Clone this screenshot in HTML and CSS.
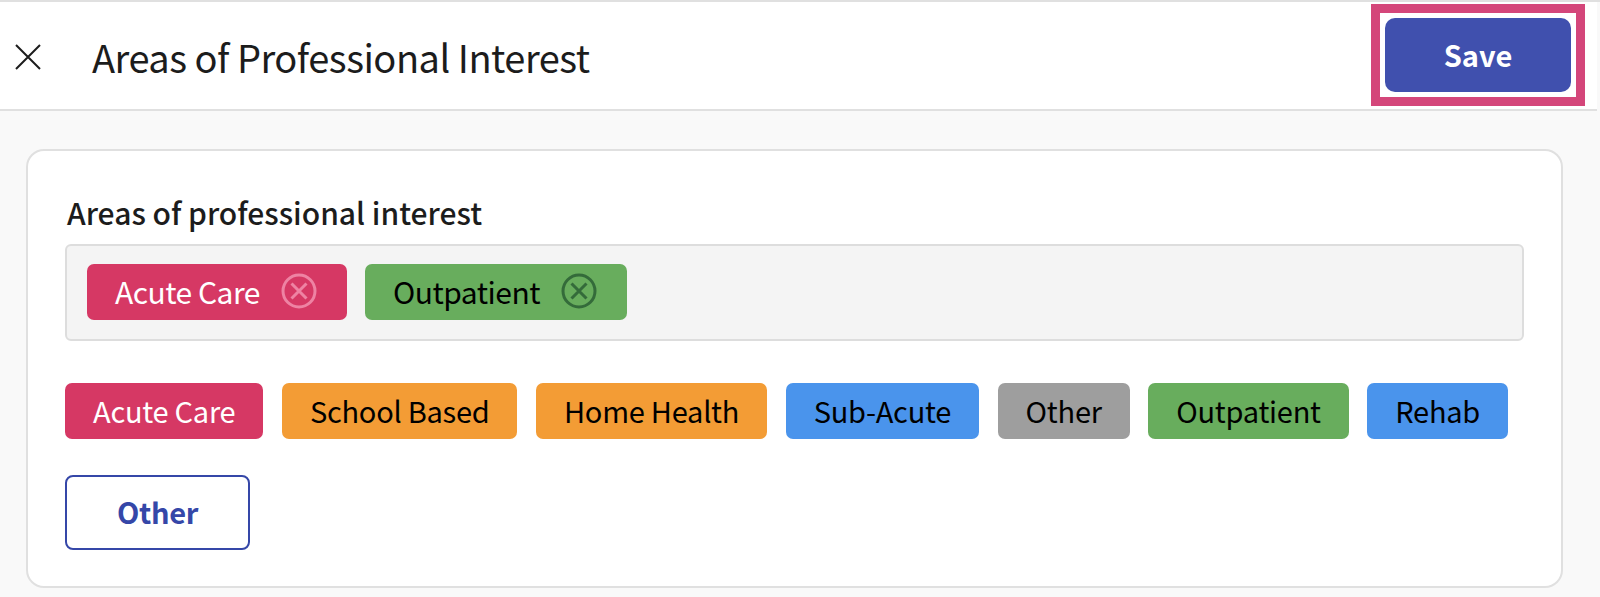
FILE: index.html
```html
<!DOCTYPE html>
<html lang="en">
<head>
    <meta charset="UTF-8">
    <meta name="viewport" content="width=device-width, initial-scale=1.0">
    <title>Areas of Professional Interest</title>
    <link rel="stylesheet" href="styles.css">
</head>
<body>
    <header class="top-bar">
        <div class="top-left">
            <svg class="close-icon" viewBox="0 0 26 26" width="26" height="26">
                <path d="M1 1 L25 25 M25 1 L1 25" stroke="#1c1c1c" stroke-width="2" fill="none"/>
            </svg>
            <h1 class="page-title">Areas of Professional Interest</h1>
        </div>
        <div class="save-highlight">
            <button class="save-btn">Save</button>
        </div>
    </header>

    <main class="card">
        <label class="field-label">Areas of professional interest</label>
        <div class="selected-box">
            <span class="tag pink selected-tag">Acute Care
                <svg class="remove-icon" viewBox="0 0 36 36" width="36" height="36">
                    <circle cx="18" cy="18" r="16" stroke="#ee83a3" stroke-width="3" fill="none"/>
                    <path d="M10.5 10.5 L25.5 25.5 M25.5 10.5 L10.5 25.5" stroke="#ee83a3" stroke-width="3" fill="none"/>
                </svg>
            </span>
            <span class="tag green selected-tag">Outpatient
                <svg class="remove-icon" viewBox="0 0 36 36" width="36" height="36">
                    <circle cx="18" cy="18" r="16" stroke="#346b3a" stroke-width="3" fill="none"/>
                    <path d="M10.5 10.5 L25.5 25.5 M25.5 10.5 L10.5 25.5" stroke="#346b3a" stroke-width="3" fill="none"/>
                </svg>
            </span>
        </div>
        <div class="options">
            <span class="tag pink">Acute Care</span>
            <span class="tag orange">School Based</span>
            <span class="tag orange">Home Health</span>
            <span class="tag blue">Sub-Acute</span>
            <span class="tag gray">Other</span>
            <span class="tag green">Outpatient</span>
            <span class="tag blue">Rehab</span>
        </div>
        <button class="other-btn">Other</button>
    </main>
</body>
</html>
```

FILE: styles.css
```css
* {
    box-sizing: border-box;
}

html, body {
    height: 100%;
}

body {
    margin: 0;
    padding-top: 2px;
    overflow: hidden;
    font-family: "Noto Sans CJK KR", "Noto Sans", sans-serif;
    background-color: #f9f9f9;
    box-shadow: inset 0 2px 0 #e0e0e0;
}

.top-bar {
    display: flex;
    justify-content: space-between;
    align-items: center;
    height: 109px;
    margin-right: 3px;
    padding: 0 12px 0 15px;
    background-color: #fff;
    border-bottom: 2px solid #e0e0e0;
}

.top-left {
    display: flex;
    align-items: center;
    gap: 51px;
    margin-top: 3px;
}

.close-icon {
    display: block;
}

.page-title {
    margin: 0;
    font-size: 38px;
    font-weight: 400;
    line-height: 50px;
    letter-spacing: -0.5px;
    color: #1c1c1c;
}

.save-highlight {
    align-self: flex-start;
    width: 214px;
    height: 102px;
    margin-top: 2px;
    padding: 5px;
    border: 9px solid #d4467a;
    background-color: #fff;
}

.save-btn {
    display: block;
    width: 100%;
    height: 100%;
    padding: 0 0 2px;
    border: none;
    border-radius: 10px;
    background-color: #4050ae;
    color: #fff;
    font-family: inherit;
    font-size: 29px;
    font-weight: 700;
}

.card {
    margin: 38px 37px 0 26px;
    height: 439px;
    padding: 43px 37px 0;
    background-color: #fff;
    border: 2px solid #e0e0e0;
    border-radius: 18px;
}

.field-label {
    display: block;
    margin-left: 2px;
    font-size: 30px;
    font-weight: 500;
    line-height: 36px;
    color: #1c1c1c;
}

.selected-box {
    display: flex;
    gap: 18px;
    height: 97px;
    margin-top: 14px;
    padding: 18px 20px;
    background-color: #f4f4f4;
    border: 2px solid #ddd;
    border-radius: 6px;
}

.options {
    display: flex;
    gap: 18.5px;
    margin-top: 42px;
}

.tag {
    display: flex;
    align-items: center;
    height: 56px;
    padding: 0 28px 2px;
    border-radius: 7px;
    font-size: 29px;
    letter-spacing: -0.25px;
    white-space: nowrap;
    color: #000;
}

.selected-tag {
    gap: 21px;
    padding-right: 30px;
    font-size: 30px;
    letter-spacing: -0.5px;
}

.remove-icon {
    display: block;
}

.pink {
    background-color: #d63864;
    color: #fff;
}

.orange {
    background-color: #f39c35;
}

.blue {
    background-color: #4a94ec;
}

.gray {
    background-color: #9e9e9e;
}

.green {
    background-color: #68ad5d;
}

.other-btn {
    display: block;
    width: 185px;
    height: 75px;
    margin-top: 36px;
    padding: 0 0 3px;
    border: 2px solid #3547a8;
    border-radius: 8px;
    background-color: #fff;
    color: #3547a8;
    font-family: inherit;
    font-size: 29px;
    font-weight: 700;
    letter-spacing: -0.3px;
}
```
